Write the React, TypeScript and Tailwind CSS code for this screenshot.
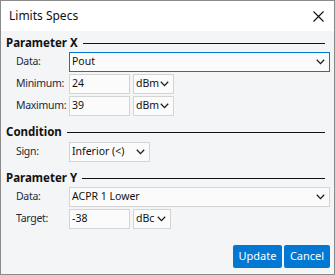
import React from "react";

const font = { fontFamily: '"Noto Sans", "Open Sans", sans-serif' };

function Chevron() {
  return (
    <svg width="9" height="6" viewBox="0 0 9 6" className="shrink-0">
      <path d="M0.8 0.8 L4.5 4.6 L8.2 0.8" fill="none" stroke="#1a1a1a" strokeWidth="1.3" />
    </svg>
  );
}

function Header({ text }: { text: string }) {
  return (
    <div className="flex h-[14px] items-center gap-[5px] pr-[5px]">
      <span className="text-[11.5px] font-bold leading-none text-[#111]">{text}</span>
      <div className="h-px flex-1 bg-[#111]" />
    </div>
  );
}

function Label({ text }: { text: string }) {
  return (
    <span className="w-[63px] shrink-0 pl-[10px] text-[10.5px] tracking-[-0.3px] text-[#1f2937]">{text}</span>
  );
}

function Input({ value }: { value: string }) {
  return (
    <div className="flex h-[20px] w-[61px] shrink-0 items-center border border-[#d4d4d4] bg-[#fbfbfc] pl-[2px] text-[10.5px] text-[#111]">
      {value}
    </div>
  );
}

function Select({ value, w, blue }: { value: string; w?: string; blue?: boolean }) {
  return (
    <div
      className={`flex h-[20px] items-center justify-between border bg-[#fbfbfc] pl-[2px] pr-[4px] text-[10.5px] text-[#111] ${
        blue ? "border-[#0078d4]" : "border-[#d4d4d4]"
      } ${w ?? "flex-1"}`}
    >
      <span>{value}</span>
      <Chevron />
    </div>
  );
}

export default function App() {
  return (
    <div style={font} className="flex h-[275px] w-[335px] flex-col border border-[#8a8a8a] bg-[#f4f5f7]">
      <div className="flex h-[30px] items-center justify-between bg-white pl-[8px] pr-[10px]">
        <span className="text-[12px] text-[#111]">Limits Specs</span>
        <svg width="11" height="11" viewBox="0 0 11 11">
          <path d="M0.5 0.5 L10.5 10.5 M10.5 0.5 L0.5 10.5" stroke="#111" strokeWidth="1.1" />
        </svg>
      </div>
      <div className="flex flex-1 flex-col pl-[5px] pr-[4px] pt-[5px]">
        <Header text="Parameter X" />
        <div className="mt-[2px] flex flex-col gap-[2px]">
          <div className="flex items-center">
            <Label text="Data:" />
            <Select value="Pout" blue />
          </div>
          <div className="flex items-center">
            <Label text="Minimum:" />
            <Input value="24" />
            <Select value="dBm" w="ml-[3px] w-[41px]" />
          </div>
          <div className="flex items-center">
            <Label text="Maximum:" />
            <Input value="39" />
            <Select value="dBm" w="ml-[3px] w-[41px]" />
          </div>
        </div>
        <div className="mt-[9px]">
          <Header text="Condition" />
        </div>
        <div className="mt-[3px] flex items-center">
          <Label text="Sign:" />
          <Select value="Inferior (<)" w="w-[81px]" />
        </div>
        <div className="mt-[9px]">
          <Header text="Parameter Y" />
        </div>
        <div className="mt-[2px] flex flex-col gap-[2px]">
          <div className="flex items-center">
            <Label text="Data:" />
            <Select value="ACPR 1 Lower" />
          </div>
          <div className="flex items-center">
            <Label text="Target:" />
            <Input value="-38" />
            <Select value="dBc" w="ml-[3px] w-[38px]" />
          </div>
        </div>
        <div className="mt-[16px] flex justify-end gap-[2px]">
          <button className="h-[23px] w-[49px] rounded-[2px] bg-[#0078d4] text-[11px] text-white">Update</button>
          <button className="h-[23px] w-[46px] rounded-[2px] bg-[#0078d4] text-[11px] text-white">Cancel</button>
        </div>
      </div>
    </div>
  );
}
